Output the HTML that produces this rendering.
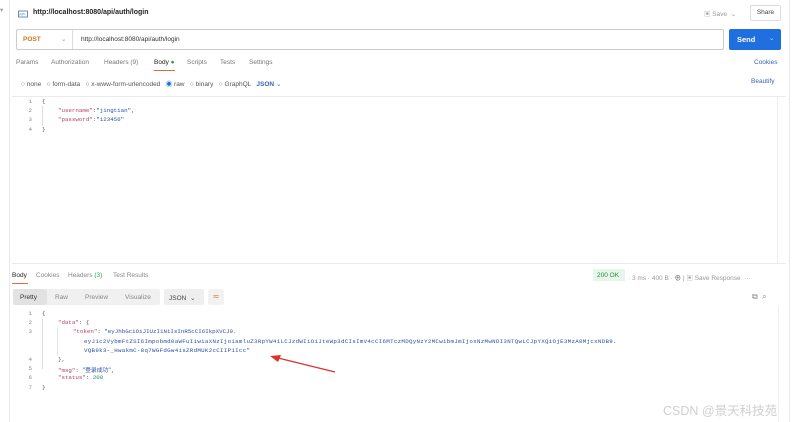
<!DOCTYPE html>
<html><head><meta charset="utf-8"><style>
*{margin:0;padding:0;box-sizing:border-box}
body{width:800px;height:422px;background:#fff;font-family:"Liberation Sans","Noto Sans CJK SC",sans-serif;font-size:6.5px;color:#555;position:relative;overflow:hidden}
.a{position:absolute;white-space:nowrap}
.m{font-family:"Liberation Mono",monospace;font-size:5.8px}
.k{color:#b8416b}.s{color:#2a4fa3}.n{color:#8a8a8a}
.ln{color:#888;font-family:"Liberation Mono",monospace;font-size:5.8px;width:10px;text-align:right}
</style></head><body>
<div class="a" style="left:9px;top:0;width:1px;height:422px;background:#e8e8e8"></div>
<div class="a" style="left:789px;top:0;width:1px;height:422px;background:#e8e8e8"></div>
<div class="a" style="left:0;top:6px;color:#999">▾</div>
<!-- title -->
<svg class="a" style="left:18px;top:9px" width="10" height="9"><rect x="0.5" y="2" width="9" height="6" fill="none" stroke="#6a8fb0" stroke-width="1"/><text x="1" y="6.5" font-size="4" fill="#6a8fb0" font-family="Liberation Sans">API</text></svg>
<div class="a" style="left:33px;top:9px;font-size:7px;font-weight:bold;color:#222">http://localhost:8080/api/auth/login</div>
<div class="a" style="left:704px;top:8px;color:#999">▣ Save &nbsp;⌄</div>
<div class="a" style="left:750px;top:5px;width:31px;height:16px;border:1px solid #ddd;border-radius:2px;text-align:center;line-height:14px;color:#444">Share</div>
<!-- url bar -->
<div class="a" style="left:16px;top:29px;width:708px;height:21px;border:1px solid #ccc;border-radius:2px"></div>
<div class="a" style="left:72px;top:30px;width:1px;height:19px;background:#ddd"></div>
<div class="a" style="left:23px;top:36px;color:#c8781c;font-weight:bold">POST</div>
<div class="a" style="left:61px;top:35px;color:#999">⌄</div>
<div class="a" style="left:81px;top:36px;color:#333">http://localhost:8080/api/auth/login</div>
<div class="a" style="left:729px;top:29px;width:52px;height:21px;background:#1f6fe0;border-radius:2px"></div>
<div class="a" style="left:737px;top:35px;color:#fff;font-weight:bold;font-size:7.5px">Send</div>
<div class="a" style="left:769px;top:34px;color:#cfe0ff">⌄</div>
<!-- tabs -->
<div class="a" style="left:16px;top:59px;color:#777">Params</div>
<div class="a" style="left:51px;top:59px;color:#777">Authorization</div>
<div class="a" style="left:104px;top:59px;color:#777">Headers (9)</div>
<div class="a" style="left:154px;top:59px;color:#222">Body <span style="color:#2a9d4a">●</span></div>
<div class="a" style="left:154px;top:70px;width:21px;height:1px;background:#e36a3a"></div>
<div class="a" style="left:187px;top:59px;color:#777">Scripts</div>
<div class="a" style="left:220px;top:59px;color:#777">Tests</div>
<div class="a" style="left:249px;top:59px;color:#777">Settings</div>
<div class="a" style="left:754px;top:59px;color:#3a62b5">Cookies</div>
<!-- radios -->
<div class="a" style="left:21px;top:78px;color:#555">○ none &nbsp;&nbsp;○ form-data &nbsp;&nbsp;○ x-www-form-urlencoded &nbsp;&nbsp;<span style="color:#1f6fe0">◉</span> raw &nbsp;&nbsp;○ binary &nbsp;&nbsp;○ GraphQL &nbsp;&nbsp;<span style="color:#3a62b5;font-weight:bold">JSON</span> <span style="color:#3a62b5">⌄</span></div>
<div class="a" style="left:751px;top:78px;color:#3a62b5">Beautify</div>
<!-- editor -->
<div class="a" style="left:12px;top:96px;width:774px;height:168px;border:1px solid #eaeaea;border-left:none;border-right:none"></div>
<div class="a" style="left:777px;top:96px;width:1px;height:168px;background:#eee"></div>
<div class="a" style="left:42px;top:106px;width:1px;height:20px;background:#ddd"></div>
<div class="a ln" style="left:22px;top:98px">1</div><div class="a m" style="left:42px;top:98px">{</div>
<div class="a ln" style="left:22px;top:107px">2</div><div class="a m" style="left:58px;top:107px"><span class="k">"username"</span>:<span class="s">"jingtian"</span>,</div>
<div class="a ln" style="left:22px;top:116px">3</div><div class="a m" style="left:58px;top:116px"><span class="k">"password"</span>:<span class="s">"123456"</span></div>
<div class="a ln" style="left:22px;top:126px">4</div><div class="a m" style="left:42px;top:126px">}</div>
<!-- response tabs -->
<div class="a" style="left:12px;top:272px;color:#222">Body</div>
<div class="a" style="left:12px;top:283px;width:16px;height:1px;background:#e36a3a"></div>
<div class="a" style="left:36px;top:272px;color:#888">Cookies</div>
<div class="a" style="left:68px;top:272px;color:#888">Headers <span style="color:#2a9d4a">(3)</span></div>
<div class="a" style="left:113px;top:272px;color:#888">Test Results</div>
<div class="a" style="left:593px;top:269px;width:32px;height:12px;background:#e6f6ea"></div>
<div class="a" style="left:597px;top:272px;color:#2a8a3e">200 OK</div>
<div class="a" style="left:628px;top:272px;color:#999">· 3 ms · 400 B · <span style="color:#555">⊕</span> | ▣ Save Response &nbsp;···</div>
<!-- toolbar -->
<div class="a" style="left:13px;top:289px;width:147px;height:16px;background:#f0f0f0;border-radius:2px"></div>
<div class="a" style="left:13px;top:289px;width:34px;height:16px;background:#e2e2e2;border-radius:2px"></div>
<div class="a" style="left:20px;top:294px;color:#333">Pretty</div>
<div class="a" style="left:55px;top:294px;color:#888">Raw</div>
<div class="a" style="left:85px;top:294px;color:#888">Preview</div>
<div class="a" style="left:125px;top:294px;color:#888">Visualize</div>
<div class="a" style="left:164px;top:289px;width:40px;height:16px;background:#eee;border-radius:2px"></div>
<div class="a" style="left:169px;top:294px;color:#444">JSON &nbsp;⌄</div>
<div class="a" style="left:208px;top:289px;width:16px;height:16px;background:#f2f2f2;border-radius:2px;color:#e36a3a;text-align:center;line-height:15px;font-size:8px">≂</div>
<div class="a" style="left:752px;top:292px;color:#888;font-size:8px">⧉ &nbsp;⌕</div>
<div class="a" style="left:778px;top:306px;width:1px;height:116px;background:#eee"></div>
<!-- response body -->
<div class="a" style="left:42px;top:319px;width:1px;height:50px;background:#ddd"></div>
<div class="a" style="left:57px;top:328px;width:1px;height:28px;background:#e5e5e5"></div>
<div class="a ln" style="left:22px;top:310px">1</div><div class="a m" style="left:42px;top:310px">{</div>
<div class="a ln" style="left:22px;top:319px">2</div><div class="a m" style="left:58px;top:319px"><span class="k">"data"</span>: {</div>
<div class="a ln" style="left:22px;top:328px">3</div><div class="a m" style="left:73px;top:328px"><span class="k">"token"</span>: <span class="s">"eyJhbGciOiJIUzI1NiIsInR5cCI6IkpXVCJ9.</span></div>
<div class="a m s" style="left:84px;top:338px;letter-spacing:0.3px">eyJ1c2VybmFtZSI6Impobmd0aWFuIiwiaXNzIjoiamluZ3RpYW41LCJzdWIiOiJteWp3dCIsImV4cCI6MTczMDQyNzY2MCwibmJmIjoxNzMwNDI3NTQwLCJpYXQiOjE3MzA0MjcxNDB9.</div>
<div class="a m s" style="left:84px;top:347px;letter-spacing:0.3px">VQB9k3-_HwakmC-8q7WGFdGw4isZRdMUK2cCIIP1Icc"</div>
<div class="a ln" style="left:22px;top:356px">4</div><div class="a m" style="left:58px;top:356px">},</div>
<div class="a ln" style="left:22px;top:365px">5</div><div class="a m" style="left:58px;top:365px"><span class="k">"msg"</span>: <span class="s" style="font-family:'Noto Sans CJK SC',sans-serif">"登录成功"</span>,</div>
<div class="a ln" style="left:22px;top:374px">6</div><div class="a m" style="left:58px;top:374px"><span class="k">"status"</span>: <span style="color:#2a8a6e">200</span></div>
<div class="a ln" style="left:22px;top:384px">7</div><div class="a m" style="left:42px;top:384px">}</div>
<!-- arrow -->
<svg class="a" style="left:268px;top:352px" width="70" height="22"><line x1="67" y1="20" x2="6" y2="5" stroke="#e0302a" stroke-width="1.3"/><polygon points="2,4 13,3 10,10" fill="#e0302a"/></svg>
<div class="a" style="left:663px;top:400px;font-size:12.5px;color:#cfcfcf;font-family:'Liberation Sans','Noto Sans CJK SC',sans-serif">CSDN @景天科技苑</div>
</body></html>
